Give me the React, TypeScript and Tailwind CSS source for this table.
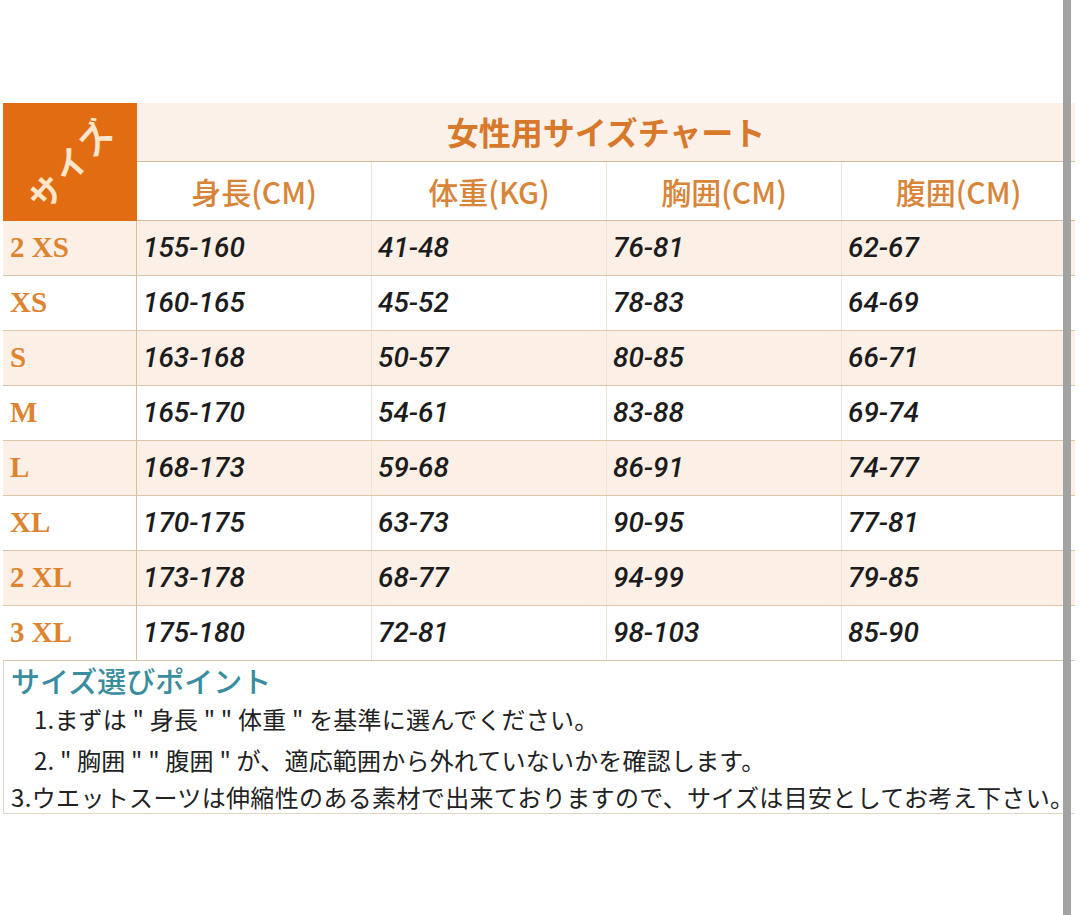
import React from "react";

const rows: [string, string, string, string, string][] = [
  ["2 XS", "155-160", "41-48", "76-81", "62-67"],
  ["XS", "160-165", "45-52", "78-83", "64-69"],
  ["S", "163-168", "50-57", "80-85", "66-71"],
  ["M", "165-170", "54-61", "83-88", "69-74"],
  ["L", "168-173", "59-68", "86-91", "74-77"],
  ["XL", "170-175", "63-73", "90-95", "77-81"],
  ["2 XL", "173-178", "68-77", "94-99", "79-85"],
  ["3 XL", "175-180", "72-81", "98-103", "85-90"],
];

const cjk = "font-['Noto_Sans_CJK_JP','Noto_Sans',sans-serif]";

export default function App() {
  return (
    <div className="relative w-[1080px] h-[915px] bg-white overflow-hidden">
      <div className="pt-[103px] pl-[3px] w-[1075px]">
        {/* header block */}
        <div className="flex">
          <div className="relative w-[134px] h-[118px] bg-[#e26c12]">
            <div
              className={`absolute left-[68px] top-[60px] -translate-x-1/2 -translate-y-1/2 -rotate-[48deg] whitespace-nowrap text-[33px] font-bold leading-none text-[#fbe6cc] tracking-[4px] ${cjk}`}
            >
              サイズ
            </div>
          </div>
          <div className="flex-1 flex flex-col">
            <div
              className={`h-[59px] bg-[#fcf1e9] border-b border-[#d6bc9c] flex items-center justify-center text-[32px] font-bold text-[#d7782a] pb-[3px] ${cjk}`}
            >
              女性用サイズチャート
            </div>
            <div className="h-[59px] flex border-b border-[#d6bc9c] bg-white">
              {["身長(CM)", "体重(KG)", "胸囲(CM)", "腹囲(CM)"].map((h, i) => (
                <div
                  key={h}
                  className={`${i === 3 ? "w-[233px]" : "w-[235px] border-r border-[#efe4d6]"} flex items-center justify-center text-[30px] font-medium text-[#d8853a] ${cjk}`}
                >
                  {h}
                </div>
              ))}
            </div>
          </div>
        </div>
        {/* data rows */}
        {rows.map((r, idx) => (
          <div
            key={r[0]}
            className={`flex h-[55px] border-b border-[#dcc6aa] ${idx % 2 === 0 ? "bg-[#fcefe5]" : "bg-white"}`}
          >
            <div className="w-[134px] border-r border-[#d9bf9c] pl-[7px] flex items-center font-['Liberation_Serif',serif] font-bold text-[29px] text-[#dc8430]">
              {r[0]}
            </div>
            {r.slice(1).map((v, i) => (
              <div
                key={i}
                className={`${i === 3 ? "w-[233px]" : "w-[235px] border-r border-[#efe4d6]"} pl-[6px] flex items-center font-['Roboto',sans-serif] italic font-medium text-[28px] text-[#1c1c1c]`}
              >
                {v}
              </div>
            ))}
          </div>
        ))}
        {/* notes */}
        <div className={`border-b border-l border-[#e3d6c2] ${cjk}`}>
          <div className="h-[38px] leading-[38px] pl-[7px] text-[29px] font-medium text-[#3a8d9e]">
            サイズ選びポイント
          </div>
          <div className="h-[40px] flex items-center pl-[30px] text-[24px] tracking-[0.2px] text-[#222] whitespace-nowrap">
            1.まずは " 身長 " " 体重 " を基準に選んでください。
          </div>
          <div className="h-[42px] flex items-center pl-[30px] text-[24px] tracking-[0.2px] text-[#222] whitespace-nowrap">
            2. " 胸囲 " " 腹囲 " が、適応範囲から外れていないかを確認します。
          </div>
          <div className="h-[32px] flex items-center pl-[7px] text-[24px] tracking-[0.35px] text-[#222] whitespace-nowrap">
            3.ウエットスーツは伸縮性のある素材で出来ておりますので、サイズは目安としてお考え下さい。
          </div>
        </div>
      </div>
      {/* scrollbar overlay */}
      <div className="absolute top-0 left-[1063px] w-[8px] h-[915px] bg-[#a2a2a2]" />
    </div>
  );
}
